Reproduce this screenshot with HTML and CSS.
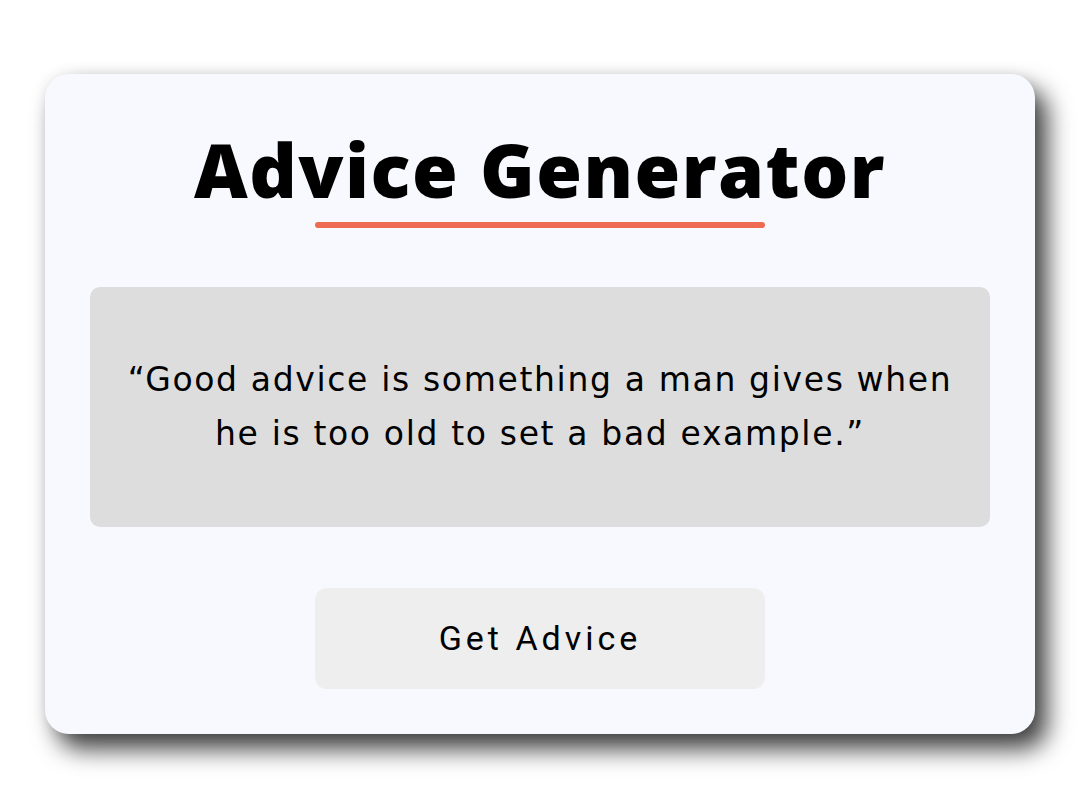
FILE: index.html
```html
<!DOCTYPE html>
<html lang="en">
<head>
<meta charset="utf-8">
<title>Advice Generator</title>
<link rel="stylesheet" href="styles.css">
</head>
<body>
<main class="card">
  <h1 class="title">Advice Generator</h1>
  <div class="underline"></div>
  <div class="quote-box">
    <p class="quote">“Good advice is something a man gives when he is too old to set a bad example.”</p>
  </div>
  <button class="btn" type="button">Get Advice</button>
</main>
</body>
</html>
```
FILE: styles.css
```css
* { box-sizing: border-box; }
html, body { margin: 0; padding: 0; }
body {
  background: #ffffff;
  height: 807px;
  display: flex;
  align-items: center;
  justify-content: center;
  font-family: "Open Sans", "Liberation Sans", sans-serif;
}
.card {
  width: 990px;
  height: 660px;
  background: #f8f9fe;
  border-radius: 24px;
  box-shadow: 12px 15px 24px rgba(0, 0, 0, 0.75), 0 0 14px rgba(0, 0, 0, 0.08);
  display: flex;
  flex-direction: column;
  align-items: center;
  padding-top: 48px;
}
.title {
  margin: 0;
  font-size: 74px;
  font-weight: 800;
  line-height: 96px;
  color: #000;
  letter-spacing: 1.5px;
}
.underline {
  width: 450px;
  height: 6px;
  border-radius: 3px;
  background: #ee6a53;
  margin-top: 4px;
}
.quote-box {
  margin-top: 59px;
  width: 900px;
  height: 240px;
  background: #dddddd;
  border-radius: 10px;
  display: flex;
  align-items: center;
  justify-content: center;
  padding: 0 25px;
}
.quote {
  margin: 0;
  text-align: center;
  font-family: "DejaVu Sans", "Open Sans", sans-serif;
  font-size: 33px;
  letter-spacing: 1.65px;
  line-height: 54px;
  color: #000;
}
.btn {
  margin-top: 61px;
  width: 450px;
  height: 101px;
  border: none;
  border-radius: 12px;
  background: #eeeeee;
  font-family: Roboto, "Liberation Sans", sans-serif;
  font-size: 34px;
  letter-spacing: 4px;
  color: #000;
  cursor: pointer;
}
```
